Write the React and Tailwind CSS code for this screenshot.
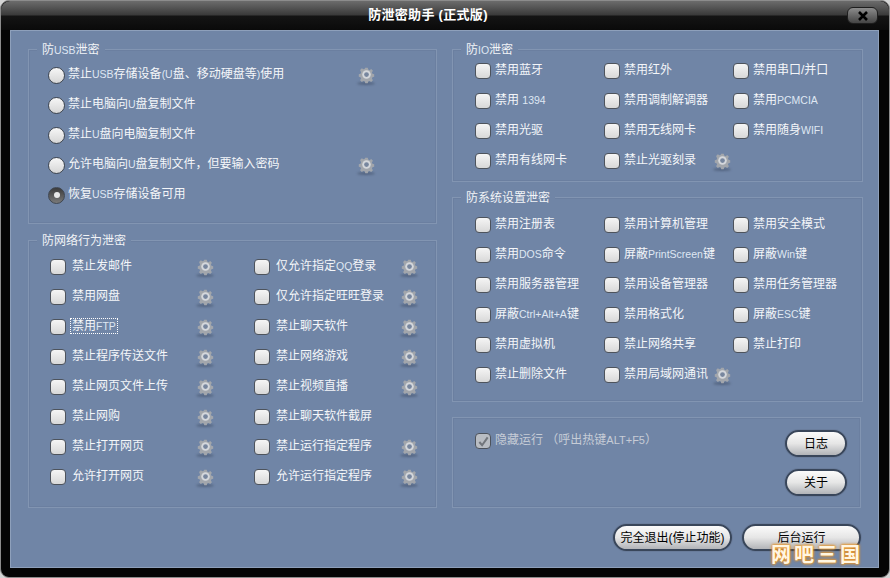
import React from "react";

const font = { fontFamily: '"Liberation Sans","Noto Sans CJK SC",sans-serif' };

// latin runs are drawn narrower than the CJK text in the original
const Label = ({ text }) =>
  text.split(/([A-Za-z0-9+()]+)/).map((part, i) =>
    i % 2 ? (
      <span key={i} className="text-[10.5px] text-[#dfe7f3]">
        {part}
      </span>
    ) : (
      part
    )
  );

const Gear = () => (
  <span className="relative mb-[2px] flex h-[20px] w-[20px] items-center justify-center">
    <span className="absolute bottom-[-1px] left-[1px] h-[3px] w-[18px] rounded-[50%] bg-[#52637f] blur-[1px]" />
    <svg viewBox="0 0 20 20" className="relative h-[19px] w-[19px]">
      <path
        d="M8.500 2h3l.5 2.200 1.600.7 1.900-1.200 2 2-1.200 1.900.7 1.600 2 .5v3l-2 .5-.7 1.600 1.200 1.900-2 2-1.900-1.200-1.600.7-.5 2h-3l-.5-2-1.600-.7-1.900 1.200-2-2 1.200-1.900-.7-1.600-2-.5v-3l2-.5.7-1.600L2.500 4.700l2-2 1.900 1.200L8 3.200z"
        fill="#a2a6ac"
        transform="translate(1 1) scale(0.9)"
      />
      <circle cx="10" cy="10" r="4.500" fill="#d5d8dc" />
      <circle cx="10" cy="10" r="2.500" fill="#77869e" />
    </svg>
  </span>
);

const Radio = ({ checked }) => (
  <span
    className={`flex h-[17px] w-[17px] shrink-0 items-center justify-center rounded-full border border-[#3f4650] ${
      checked ? "bg-gradient-to-b from-[#3c3c3c] to-[#7a7a7a]" : "bg-gradient-to-b from-[#f6f6f6] to-[#d6d6d6]"
    }`}
  >
    {checked && <span className="h-[6px] w-[6px] rounded-full bg-[#e8e8e8]" />}
  </span>
);

const Check = ({ checked }) => (
  <span
    className={`flex h-[16px] w-[16px] shrink-0 items-center justify-center rounded-[4px] border border-[#4d535c] ${
      checked ? "bg-[#b9bdc3]" : "bg-gradient-to-b from-[#f5f5f5] to-[#d8d8d8]"
    }`}
  >
    {checked && (
      <svg viewBox="0 0 14 14" className="h-[13px] w-[13px]">
        <path d="M2.500 7.500 5.500 11 11.500 2.500" fill="none" stroke="#72767c" strokeWidth="2.200" />
      </svg>
    )}
  </span>
);

const Group = ({ title, className, children }) => (
  <fieldset className={`relative border border-[#8295b2] shadow-[inset_0_0_0_1px_#6b7fa0] ${className}`}>
    {title && (
      <legend className="absolute left-[8px] top-[-9px] bg-[#7085a6] px-[5px] text-[12px] leading-[18px] text-[#f2f4f7]">
        <Label text={title} />
      </legend>
    )}
    {children}
  </fieldset>
);

const CheckItem = ({ label, gear, focus }) => (
  <div className="flex h-[30px] items-center">
    <Check />
    <span
      className={`mb-[2px] whitespace-nowrap text-[12px] leading-[14px] text-[#f4f6f9] ${
        focus ? "ml-[4px] border border-dotted border-white px-px" : "ml-[6px]"
      }`}
    >
      <Label text={label} />
    </span>
    {gear && (
      <span className="ml-auto">
        <Gear />
      </span>
    )}
  </div>
);

const PillButton = ({ label, className }) => (
  <button
    className={`h-[27px] rounded-full border-2 border-[#39465a] bg-gradient-to-b from-[#fbfbfb] via-[#e6e6e6] to-[#b2b4b8] text-[12px] text-black shadow-[0_0_0_1px_#6a7d9c] ${className}`}
  >
    {label}
  </button>
);

const usb = [
  { label: "禁止USB存储设备(U盘、移动硬盘等)使用", gear: true },
  { label: "禁止电脑向U盘复制文件" },
  { label: "禁止U盘向电脑复制文件" },
  { label: "允许电脑向U盘复制文件，但要输入密码", gear: true },
  { label: "恢复USB存储设备可用", checked: true },
];

const net = [
  ["禁止发邮件", true], ["仅允许指定QQ登录", true],
  ["禁用网盘", true], ["仅允许指定旺旺登录", true],
  ["禁用FTP", true, true], ["禁止聊天软件", true],
  ["禁止程序传送文件", true], ["禁止网络游戏", true],
  ["禁止网页文件上传", true], ["禁止视频直播", true],
  ["禁止网购", true], ["禁止聊天软件截屏", false],
  ["禁止打开网页", true], ["禁止运行指定程序", true],
  ["允许打开网页", true], ["允许运行指定程序", true],
];

const io = [
  ["禁用蓝牙"], ["禁用红外"], ["禁用串口/并口"],
  ["禁用 1394"], ["禁用调制解调器"], ["禁用PCMCIA"],
  ["禁用光驱"], ["禁用无线网卡"], ["禁用随身WIFI"],
  ["禁用有线网卡"], ["禁止光驱刻录", true],
];

const sys = [
  ["禁用注册表"], ["禁用计算机管理"], ["禁用安全模式"],
  ["禁用DOS命令"], ["屏蔽PrintScreen键"], ["屏蔽Win键"],
  ["禁用服务器管理"], ["禁用设备管理器"], ["禁用任务管理器"],
  ["屏蔽Ctrl+Alt+A键"], ["禁用格式化"], ["屏蔽ESC键"],
  ["禁用虚拟机"], ["禁止网络共享"], ["禁止打印"],
  ["禁止删除文件"], ["禁用局域网通讯", true],
];

const ThreeCols = ({ items }) => (
  <div className="grid grid-cols-[129px_129px_129px]">
    {items.map(([label, gear]) => (
      <div key={label} className="flex h-[30px] items-center">
        <Check />
        <span className="mb-[2px] ml-[4px] whitespace-nowrap text-[12px] leading-[16px] text-[#f4f6f9]">
          <Label text={label} />
        </span>
        {gear && (
          <span className="ml-auto pr-px">
            <Gear />
          </span>
        )}
      </div>
    ))}
  </div>
);

export default function App() {
  return (
    <div className="relative h-[578px] w-[890px] overflow-hidden bg-[#d4d4d4]" style={font}>
      <div className="flex h-[578px] flex-col rounded-[9px] border border-[#8c8c8c] bg-[#050505]">
        {/* title bar */}
        <div className="relative flex h-[29px] shrink-0 items-center justify-center rounded-t-[9px] bg-[linear-gradient(#6c6c6c_0,#3a3a3a_48%,#141414_52%,#0a0a0a_100%)] pb-[2px] pr-[34px]">
          <span className="text-[13px] font-bold tracking-[0.3px] text-white">防泄密助手 (正式版)</span>
          <button className="absolute right-[11px] top-[6px] flex h-[17px] w-[31px] items-center justify-center rounded-[6px] border border-[#1e1e1e] bg-gradient-to-b from-[#8c8c8c] to-[#454545]">
            <svg viewBox="0 0 12 10" className="h-[10px] w-[12px]">
              <path d="M2 1l8 8M10 1 2 9" stroke="#000" strokeWidth="2.600" fill="none" />
            </svg>
          </button>
        </div>

        {/* main panel */}
        <div className="mb-[9px] ml-[9px] mr-[10px] flex flex-1 flex-col border border-[#8ea0bb] bg-[#7085a6] pl-[17px] pr-[17px] pt-[18px]">
          <div className="flex gap-[15px]">
            <div className="flex w-[409px] flex-col gap-[16px]">
              <Group title="防USB泄密" className="h-[175px] pl-[19px] pr-[60px] pt-[10px]">
                {usb.map((u) => (
                  <div key={u.label} className="flex h-[30px] items-center">
                    <Radio checked={u.checked} />
                    <span className="mb-[2px] ml-[3px] whitespace-nowrap text-[12px] leading-[16px] text-[#f4f6f9]">
                      <Label text={u.label} />
                    </span>
                    {u.gear && (
                      <span className="ml-auto">
                        <Gear />
                      </span>
                    )}
                  </div>
                ))}
              </Group>
              <Group title="防网络行为泄密" className="h-[268px] pl-[21px] pt-[11px]">
                <div className="grid w-[370px] grid-cols-[165px_165px] gap-x-[39px]">
                  {net.map(([label, gear, focus]) => (
                    <CheckItem key={label} label={label} gear={gear} focus={focus} />
                  ))}
                </div>
              </Group>
            </div>

            <div className="flex w-[409px] flex-col gap-[15px]">
              <Group title="防IO泄密" className="h-[133px] pl-[22px] pt-[6px]">
                <ThreeCols items={io} />
              </Group>
              <Group title="防系统设置泄密" className="h-[205px] pl-[22px] pt-[12px]">
                <ThreeCols items={sys} />
              </Group>
              <Group title="" className="h-[91px] pl-[22px] pt-[8px]">
                <div className="flex h-[30px] items-center">
                  <Check checked />
                  <span className="mb-[2px] ml-[4px] whitespace-nowrap text-[12px] text-[#c6ccd6]">
                    隐藏运行 （呼出热键<span className="text-[11px]">ALT+F5</span>）
                  </span>
                </div>
                <div className="absolute right-[13px] top-[12px] flex flex-col gap-[12px]">
                  <PillButton label="日志" className="w-[62px]" />
                  <PillButton label="关于" className="w-[62px]" />
                </div>
              </Group>
            </div>
          </div>

          <div className="mt-[16px] flex justify-end gap-[10px]">
            <PillButton label="完全退出(停止功能)" className="w-[119px]" />
            <PillButton label="后台运行" className="w-[119px]" />
          </div>
        </div>
      </div>
      <span className="absolute left-[771px] top-[544px] text-[20px] font-semibold leading-[22px] tracking-[3px] text-[#fff6e2] [text-shadow:0_0_2px_#e8952a,0_0_3px_#e8952a,0_0_3px_#e8952a]">
        网吧三国
      </span>
    </div>
  );
}
